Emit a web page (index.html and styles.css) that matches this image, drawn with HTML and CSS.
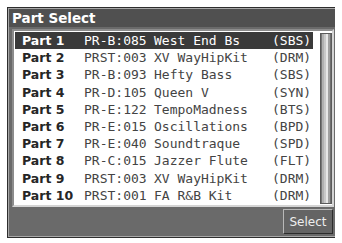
FILE: index.html
```html
<!DOCTYPE html>
<html lang="en">
<head>
    <meta charset="UTF-8">
    <title>Part Select</title>
    <link rel="stylesheet" href="styles.css">
</head>
<body>
    <div class="window">
        <div class="title">Part Select</div>

        <div class="list">
            <div class="rows" id="rows"></div>
            <div class="scrollbar"><div class="thumb"></div></div>
        </div>

        <div class="footer">
            <button class="btn">Select</button>
        </div>
    </div>

    <script>
        const parts = [
            ['PR-B:085', 'West End Bs', 'SBS'],
            ['PRST:003', 'XV WayHipKit', 'DRM'],
            ['PR-B:093', 'Hefty Bass', 'SBS'],
            ['PR-D:105', 'Queen V', 'SYN'],
            ['PR-E:122', 'TempoMadness', 'BTS'],
            ['PR-E:015', 'Oscillations', 'BPD'],
            ['PR-E:040', 'Soundtraque', 'SPD'],
            ['PR-C:015', 'Jazzer Flute', 'FLT'],
            ['PRST:003', 'XV WayHipKit', 'DRM'],
            ['PRST:001', 'FA R&B Kit', 'DRM']
        ];

        const rows = document.getElementById('rows');
        parts.forEach(function(p, i) {
            const row = document.createElement('div');
            row.className = 'row' + (i === 0 ? ' selected' : '');
            row.innerHTML =
                '<span class="part">Part ' + (i + 1) + '</span>' +
                '<span class="code">' + p[0] + '</span>' +
                '<span class="name"></span>' +
                '<span class="cat">(' + p[2] + ')</span>';
            row.querySelector('.name').textContent = p[1];
            rows.appendChild(row);
        });
    </script>
</body>
</html>
```

FILE: styles.css
```css
body {
    margin: 7px;
    background: #fff;
    font-family: "DejaVu Sans", sans-serif;
}
.window {
    width: 330px;
    height: 231px;
    box-sizing: border-box;
    border: 1px solid #2e2e2e;
    background: #6a6a6a;
    box-shadow: inset 0 0 0 1px #a8a8a8;
    padding: 1px;
    display: flex;
    flex-direction: column;
}
.title {
    height: 18px;
    background: #505050;
    color: #fff;
    font-weight: bold;
    font-size: 13.5px;
    line-height: 18px;
    padding-left: 3px;
}
.list {
    margin: 2px 1px 0 3px;
    height: 178px;
    box-sizing: border-box;
    border: 2px solid;
    border-color: #8c8c8c #d4d4d4 #d4d4d4 #8c8c8c;
    background: #fff;
    display: flex;
    padding: 1px 0 0 1px;
}
.rows {
    flex: 1;
}
.row {
    height: 17.2px;
    display: flex;
    align-items: center;
    color: #444;
    font-family: "DejaVu Sans Mono", monospace;
    font-size: 13px;
}
.row.selected {
    background: #3a3a3a;
    color: #fff;
}
.part {
    width: 69px;
    box-sizing: border-box;
    padding-left: 7px;
    font-family: "DejaVu Sans", sans-serif;
    font-weight: bold;
    font-size: 12.5px;
    color: #262626;
}
.selected .part {
    color: #fff;
}
.code {
    width: 70px;
}
.name {
    width: 118px;
}
.scrollbar {
    width: 10px;
    margin: 1px 0 1px 7px;
    border: 1px solid #5a5a5a;
    background: #9a9a9a;
}
.thumb {
    height: 100%;
    background: linear-gradient(to right, #777 0, #777 1px, #b0b0b0 1px, #b0b0b0 3px, #c8c8c8 3px, #c8c8c8 5px, #e6e6e6 5px, #e6e6e6 7px, #a0a0a0 7px, #a0a0a0 9px, #6e6e6e 9px);
}
.footer {
    flex: 1;
    display: flex;
    justify-content: flex-end;
    align-items: center;
    padding-right: 2px;
}
.btn {
    width: 50px;
    height: 25px;
    background: #646464;
    border: 1px solid;
    border-color: #b8b8b8 #2c2c2c #2c2c2c #b8b8b8;
    color: #eee;
    font-family: "DejaVu Sans", sans-serif;
    font-size: 12px;
    padding: 0;
}
```
